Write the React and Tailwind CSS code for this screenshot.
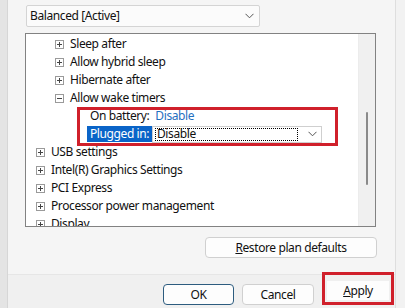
import React from "react";

const font = { fontFamily: '"Segoe UI", "Noto Sans", sans-serif' };

const Box = ({ open }) => (
  <span className="w-[9px] h-[9px] border border-[#9a9a9a] bg-white flex items-center justify-center relative shrink-0">
    <span className="absolute w-[5px] h-px bg-[#444]" />
    {!open && <span className="absolute w-px h-[5px] bg-[#444]" />}
  </span>
);

const Row = ({ level, label, open }) => (
  <div className="h-[18px] flex items-center" style={{ paddingLeft: level === 2 ? 29 : 10 }}>
    <Box open={open} />
    <span className="ml-[6px] whitespace-nowrap">{label}</span>
  </div>
);

const Chevron = () => (
  <svg width="9" height="6" viewBox="0 0 9 6" fill="none">
    <path d="M0.5 0.8 L4.5 4.8 L8.5 0.8" stroke="#555" strokeWidth="1" />
  </svg>
);

const App = () => {
  return (
    <div className="w-[405px] h-[308px] flex bg-[#f5f5f5] overflow-hidden text-[12px] tracking-[-0.4px] text-[#111]" style={font}>
      <div className="w-[8px] bg-[#e4e4e4] border-r border-[#d6d6d6]" />
      <div className="flex-1 flex flex-col">
        <div className="flex-1 pl-[17px]">
          <div className="mt-[5px] ml-px w-[234px] h-[22px] border border-[#d4d4d4] rounded-[2px] bg-[#fbfbfb] flex items-center justify-between pl-[3px] pr-[5px]">
            <span>Balanced [Active]</span>
            <Chevron />
          </div>
          <div className="relative mt-[6px] w-[351px] h-[194px] border border-[#828282] bg-white flex">
            <div className="flex-1 overflow-hidden pt-px">
              <Row level={2} label="Sleep after" />
              <Row level={2} label="Allow hybrid sleep" />
              <Row level={2} label="Hibernate after" />
              <Row level={2} label="Allow wake timers" open />
              <div className="h-[18px] flex items-center pl-[64px]">
                <span>On battery:</span>
                <span className="ml-[6px] text-[#1f6fc0]">Disable</span>
              </div>
              <div className="h-[18px] flex items-center pl-[61px]">
                <span className="w-[65px] shrink-0 h-[16px] pl-[3px] bg-[#0a64c8] text-white flex items-center whitespace-nowrap">Plugged in:</span>
                <div className="w-[170px] shrink-0 h-[17px] border border-[#cfcfcf] bg-white flex items-center justify-between pl-[2px] pr-[4px]">
                  <span className="flex-1 h-[13px] border border-dotted border-black flex items-center pl-[1px] mr-[10px]">Disable</span>
                  <Chevron />
                </div>
              </div>
              <Row level={1} label="USB settings" />
              <Row level={1} label="Intel(R) Graphics Settings" />
              <Row level={1} label="PCI Express" />
              <Row level={1} label="Processor power management" />
              <Row level={1} label="Display" />
            </div>
            <div className="w-[17px] bg-[#f0f0f0] border-l border-[#ececec] flex justify-center">
              <div className="mt-[78px] w-[2px] h-[73px] bg-[#8a8a8a] rounded-full" />
            </div>
            <div className="absolute left-[51px] top-[73px] w-[261px] h-[39px] border-[3px] border-[#d0202b]" />
          </div>
          <div className="mt-[10px] ml-[180px] w-[172px] h-[21px] border border-[#d0d0d0] rounded-[4px] bg-[#fdfdfd] flex items-center justify-center">
            <span><span className="underline">R</span>estore plan defaults</span>
          </div>
        </div>
        <div className="h-[34px] border-t border-[#e6e6e6] bg-[#f0f0f0] flex items-start justify-end pr-[1px] gap-[8px]">
          <div className="mt-[9px] w-[71px] h-[21px] border border-[#2d5c7f] rounded-[4px] bg-[#fdfdfd] flex items-center justify-center">OK</div>
          <div className="mt-[9px] w-[72px] h-[21px] border border-[#d0d0d0] rounded-[4px] bg-[#fdfdfd] flex items-center justify-center">Cancel</div>
          <div className="mt-[-3px] w-[72px] h-[33px] border-[3px] border-[#d0202b] flex items-end justify-center pb-[2px]">
            <div className="w-[62px] h-[19px] bg-[#fdfdfd] flex items-center justify-center">
              <span><span className="underline">A</span>pply</span>
            </div>
          </div>
        </div>
      </div>
      <div className="w-[10px] bg-[#f2f2f2] border-l border-[#dedede]" />
    </div>
  );
};

export default App;
